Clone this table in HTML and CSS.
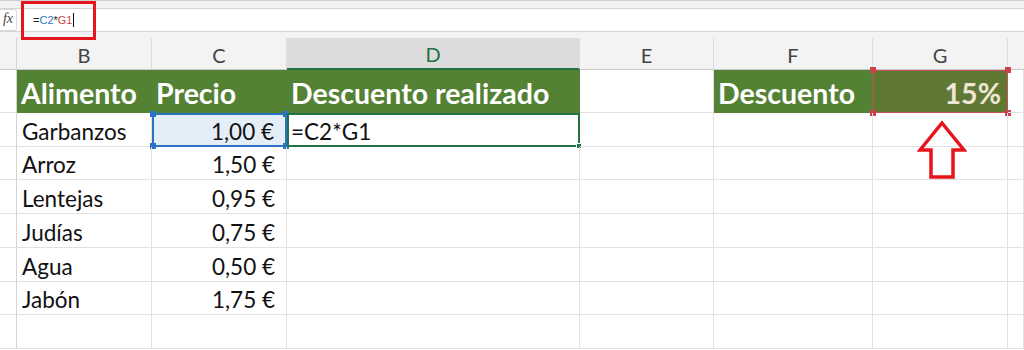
FILE: index.html
```html
<!DOCTYPE html>
<html lang="es">
<head>
<meta charset="utf-8">
<link rel="stylesheet" href="styles.css">
</head>
<body>
<div class="app">
  <div class="topstrip"></div>
  <div class="fbar">
    <div class="fx"><span class="fxbox">fx</span></div>
    <div class="finput"><span class="k">=</span><span class="rb">C2</span><span class="k">*</span><span class="rr">G1</span><span class="caret"></span></div>
  </div>
  <div class="gap"></div>
  <div class="sheet">
    <div class="ch corner"></div>
    <div class="ch">B</div>
    <div class="ch">C</div>
    <div class="ch active">D</div>
    <div class="ch">E</div>
    <div class="ch">F</div>
    <div class="ch">G</div>
    <div class="ch last"></div>

    <div class="rh"></div>
    <div class="c hd">Alimento</div>
    <div class="c hd">Precio</div>
    <div class="c hd">Descuento realizado</div>
    <div class="c"></div>
    <div class="c hd">Descuento</div>
    <div class="c hd g1">15%<i class="h tl"></i><i class="h tr"></i><i class="h bl"></i><i class="h br"></i></div>
    <div class="c"></div>

    <div class="rh"></div>
    <div class="c">Garbanzos</div>
    <div class="c num c2">1,00 €<i class="b tl"></i><i class="b tr"></i><i class="b bl"></i><i class="b br"></i></div>
    <div class="c d2">=C2*G1<i class="fill"></i></div>
    <div class="c"></div>
    <div class="c"></div>
    <div class="c"></div>
    <div class="c"></div>

    <div class="rh"></div>
    <div class="c">Arroz</div>
    <div class="c num">1,50 €</div>
    <div class="c"></div><div class="c"></div><div class="c"></div><div class="c"></div><div class="c"></div>

    <div class="rh"></div>
    <div class="c">Lentejas</div>
    <div class="c num">0,95 €</div>
    <div class="c"></div><div class="c"></div><div class="c"></div><div class="c"></div><div class="c"></div>

    <div class="rh"></div>
    <div class="c">Judías</div>
    <div class="c num">0,75 €</div>
    <div class="c"></div><div class="c"></div><div class="c"></div><div class="c"></div><div class="c"></div>

    <div class="rh"></div>
    <div class="c">Agua</div>
    <div class="c num">0,50 €</div>
    <div class="c"></div><div class="c"></div><div class="c"></div><div class="c"></div><div class="c"></div>

    <div class="rh"></div>
    <div class="c">Jabón</div>
    <div class="c num">1,75 €</div>
    <div class="c"></div><div class="c"></div><div class="c"></div><div class="c"></div><div class="c"></div>

    <div class="rh"></div>
    <div class="c"></div><div class="c"></div><div class="c"></div><div class="c"></div><div class="c"></div><div class="c"></div><div class="c"></div>
  </div>

  <div class="redbox"></div>
  <svg class="arrow" width="50" height="62" viewBox="0 0 50 62">
    <path d="M25 3 L47 30 L36 30 L36 57 L14 57 L14 30 L3 30 Z" fill="none" stroke="#e8141c" stroke-width="3.5" stroke-linejoin="miter"/>
  </svg>
</div>
</body>
</html>
```

FILE: styles.css
```css
* { box-sizing: border-box; }
html, body { margin: 0; padding: 0; background: #fff; }
body { font-family: Lato, "Liberation Sans", sans-serif; }
.app { position: relative; width: 1024px; height: 350px; overflow: hidden; background: #fff; }

.topstrip { height: 9px; background: #f3f3f3; border-top: 1px solid #d0d0d0; border-bottom: 1px solid #d4d4d4; }
.fbar { display: flex; height: 23px; background: #fff; border-bottom: 1px solid #d4d4d4; }
.fx { width: 17px; display: flex; align-items: stretch; background: #f3f3f3; }
.fxbox { flex: 1; display: flex; align-items: center; justify-content: center; background: #fff; border: 1px solid #dadada; border-left: none; border-radius: 0 3px 3px 0; font-family: "Liberation Serif", serif; font-style: italic; font-size: 14px; color: #444; padding-bottom: 2px; }
.finput { display: flex; align-items: center; padding-left: 16px; font-family: "Liberation Sans", sans-serif; font-size: 11px; }
.finput .k { color: #222; }
.finput .rb { color: #2f78c8; }
.finput .rr { color: #c8483a; }
.caret { display: inline-block; width: 1px; height: 14px; background: #111; margin-left: 1px; }
.gap { height: 6px; background: #f3f3f3; }

.sheet { display: grid; grid-template-columns: 17px 135px 135px 293px 134px 159px 135px 16px; grid-template-rows: 32px 43px 34px 33px 34px 34px 34px 33px 34px; }
.ch { background: #f3f3f3; border-right: 1px solid #dcdcdc; border-bottom: 1px solid #c8c8c8; display: flex; align-items: center; justify-content: center; font-size: 20px; color: #444; padding-top: 2px; }
.ch.corner { border-right: 1px solid #d4d4d4; }
.ch.active { background: #dcdcdc; color: #217346; border-bottom: 2px solid #217346; }
.ch.last { border-right: none; }
.rh { background: #fff; border-right: 1px solid #d4d4d4; border-bottom: 1px solid #e1e1e1; }
.c { position: relative; border-right: 1px solid #e1e1e1; border-bottom: 1px solid #e1e1e1; display: flex; align-items: center; padding: 3px 4px 0 5px; font-size: 22.5px; color: #111; white-space: nowrap; }
.c.num { justify-content: flex-end; padding-right: 11px; }
.c.hd { background: #548235; color: #fff; font-weight: bold; font-size: 28.5px; border-color: #548235; padding-left: 4px; }
.c.g1 { background: #5f7935; color: #f0e6d6; justify-content: flex-end; padding-right: 6px; border: 1px solid #c9525a; }
.c.c2 { background: #e4eef9; border: 2px solid #2b74c4; }
.c.d2 { border: 2px solid #217346; padding-left: 2px; }

.h, .b { position: absolute; width: 6px; height: 6px; }
.h { background: #c9424e; }
.b { background: #2b74c4; }
.tl { left: -4px; top: -4px; }
.tr { right: -4px; top: -4px; }
.bl { left: -4px; bottom: -4px; }
.br { right: -4px; bottom: -4px; }
.fill { position: absolute; right: -4px; bottom: -4px; width: 6px; height: 6px; background: #217346; border: 1px solid #fff; }

.redbox { position: absolute; left: 21px; top: 1px; width: 75px; height: 39px; border: 3px solid #e3151f; }
.arrow { position: absolute; left: 917px; top: 120px; }
```
